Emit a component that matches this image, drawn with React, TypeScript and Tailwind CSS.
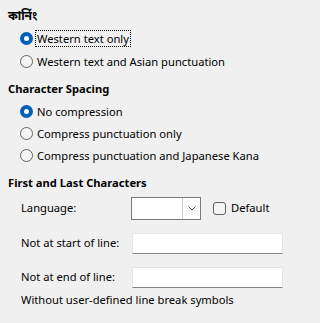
import React from "react";

function Radio({ checked, label, focus }: { checked?: boolean; label: string; focus?: boolean }) {
  return (
    <div className="flex h-[22px] items-center pl-[20px]">
      {checked ? (
        <span className="flex h-[13px] w-[13px] items-center justify-center rounded-full bg-[#005fb8]">
          <span className="h-[5px] w-[5px] rounded-full bg-white" />
        </span>
      ) : (
        <span className="h-[13px] w-[13px] rounded-full border border-[#606060] bg-[#f5f5f5]" />
      )}
      <span
        className={
          "ml-[2px] px-[1px] leading-[15px] " +
          (focus ? "border border-dotted border-black" : "border border-transparent")
        }
      >
        {label}
      </span>
    </div>
  );
}

function Heading({ children, className }: { children: React.ReactNode; className?: string }) {
  return <div className={"flex h-[22px] items-center pl-[8px] font-bold " + (className ?? "")}>{children}</div>;
}

export default function App() {
  return (
    <div className="min-h-screen w-full bg-[#f0f0f0]">
      <div
        className="h-[323px] w-[292px] overflow-hidden bg-[#f0f0f0] text-[11.2px] text-black"
        style={{ fontFamily: '"Noto Sans", "Noto Sans Bengali", sans-serif' }}
      >
        <Heading className="mt-[5px] h-[21px] text-[12px]">কার্নিং</Heading>
        <Radio checked label="Western text only" focus />
        <div className="mt-[1px]">
          <Radio label="Western text and Asian punctuation" />
        </div>
        <Heading className="mt-[6px]">Character Spacing</Heading>
        <Radio checked label="No compression" />
        <Radio label="Compress punctuation only" />
        <Radio label="Compress punctuation and Japanese Kana" />
        <Heading className="mt-[6px]">First and Last Characters</Heading>

        <div className="mt-[3px] flex h-[23px] items-center pl-[21px]">
          <span className="w-[110px]">Language:</span>
          <div className="flex h-[23px] w-[70px] border border-[#7a7a7a] bg-white">
            <div className="flex-1" />
            <div className="flex w-[18px] items-center justify-center border-l border-[#cccccc]">
              <svg width="8" height="5" viewBox="0 0 8 5">
                <path d="M0.5 0.5 L4 4 L7.5 0.5" fill="none" stroke="#606060" strokeWidth="1" />
              </svg>
            </div>
          </div>
          <span className="ml-[12px] h-[13px] w-[13px] rounded-[3px] border border-[#606060] bg-[#f5f5f5]" />
          <span className="ml-[5px]">Default</span>
        </div>

        <div className="mt-[13px] flex h-[21px] items-center pl-[21px]">
          <span className="w-[111px]">Not at start of line:</span>
          <div className="h-[21px] w-[151px] border border-[#e5e5e5] border-b-[#868686] bg-white" />
        </div>

        <div className="mt-[13px] flex h-[21px] items-center pl-[21px]">
          <span className="w-[111px]">Not at end of line:</span>
          <div className="h-[21px] w-[151px] border border-[#e5e5e5] border-b-[#868686] bg-white" />
        </div>

        <div className="mt-[1px] flex h-[22px] items-center pl-[21px]">Without user-defined line break symbols</div>
      </div>
    </div>
  );
}
